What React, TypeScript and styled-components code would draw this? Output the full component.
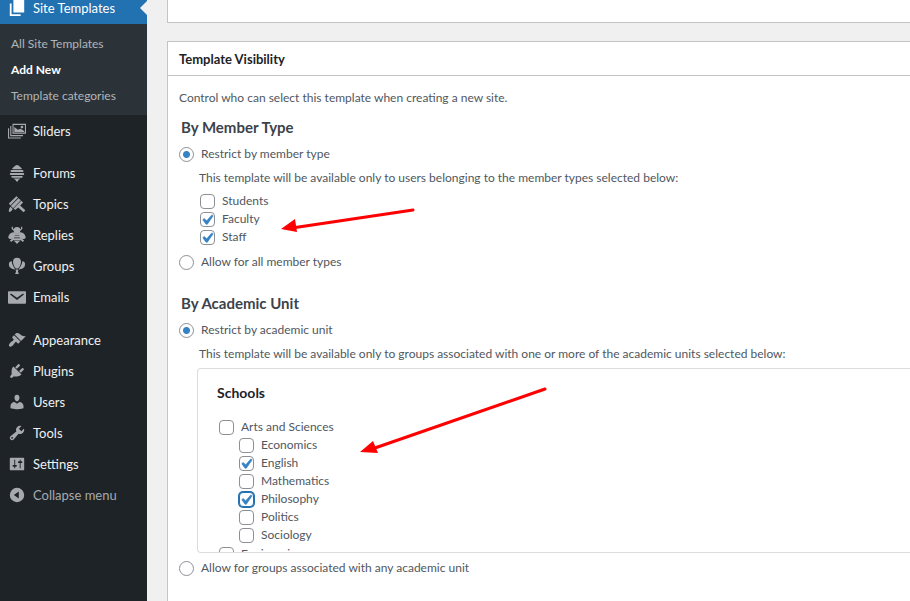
import React, { ReactNode } from "react";
import styled, { createGlobalStyle, css } from "styled-components";

const GlobalStyle = createGlobalStyle`
  *, *::before, *::after { box-sizing: border-box; }
  body {
    margin: 0;
    background: #f0f0f1;
    color: #50575e;
    font: 12px/18px Lato, "Open Sans", sans-serif;
    overflow: hidden;
  }
`;

const Page = styled.div`
  display: flex;
  height: 100vh;
  overflow: hidden;
`;

const Sidebar = styled.nav`
  flex: none;
  width: 147px;
  background: #1d2327;
`;

const MenuList = styled.ul<{ $gap?: number }>`
  list-style: none;
  margin: ${(p) => p.$gap ?? 0}px 0 0;
  padding: 0;
`;

const menuRow = css`
  display: flex;
  align-items: center;
  gap: 7px;
  width: 100%;
  height: 31px;
  padding: 0 0 0 8px;
  font-family: inherit;
  font-size: 13px;
  line-height: 18px;
  text-decoration: none;
`;

const MenuLink = styled.a`
  ${menuRow}
  color: #f0f0f1;
`;

const CurrentLink = styled(MenuLink)`
  position: relative;
  height: 24px;
  padding-bottom: 9px;
  background: #2271b1;
  color: #fff;

  &::after {
    content: "";
    position: absolute;
    right: 0;
    top: 1px;
    border: 7px solid transparent;
    border-left-width: 0;
    border-right-color: #f0f0f1;
  }
`;

const CollapseButton = styled.button`
  ${menuRow}
  border: 0;
  background: none;
  color: #a7aaad;
  cursor: pointer;
`;

const Glyph = styled.svg<{ $bright?: boolean }>`
  flex: none;
  width: 18px;
  height: 18px;
  fill: ${(p) => (p.$bright ? "#fff" : "#a7aaad")};
`;

const Submenu = styled.ul`
  list-style: none;
  margin: 0;
  padding: 7px 0 6px;
  background: #2c3338;
`;

const SubLink = styled.a<{ $current?: boolean }>`
  display: block;
  padding: 4px 11px;
  color: ${(p) => (p.$current ? "#fff" : "#b1b6bb")};
  font-weight: ${(p) => (p.$current ? 700 : 400)};
  text-decoration: none;
`;

const Main = styled.main`
  flex: 1;
  min-width: 0;
  display: flex;
  flex-direction: column;
  gap: 18px;
  padding-left: 20px;
`;

const Postbox = styled.section`
  position: relative;
  border: 1px solid #c3c4c7;
  border-right: 0;
  background: #fff;
`;

const PreviousBox = styled(Postbox)`
  flex: none;
  height: 23px;
  border-top: 0;
`;

const VisibilityBox = styled(Postbox)`
  flex: 1;
  border-bottom: 0;
`;

const BoxTitle = styled.h2`
  margin: 0;
  padding: 9px 11px 7px;
  border-bottom: 1px solid #c3c4c7;
  color: #1d2327;
  font-size: 13px;
  line-height: 17px;
  font-weight: 700;
`;

const BoxBody = styled.div`
  padding: 13px 0 0 11px;
`;

const Intro = styled.p`
  margin: 0;
`;

const Fieldset = styled.fieldset`
  min-width: 0;
  margin: 0 0 12px;
  padding: 0;
  border: 0;
`;

const Legend = styled.legend`
  padding: 11px 2px 9px;
  color: #3c434a;
  font-size: 15px;
  line-height: 18px;
  font-weight: 700;
`;

const Note = styled.p`
  margin: 6px 0 5px 20px;
`;

const ChoiceLabel = styled.label`
  display: flex;
  align-items: center;
  gap: 7px;
  height: 18px;
`;

const Radio = styled.input`
  appearance: none;
  flex: none;
  width: 15px;
  height: 15px;
  margin: 0;
  border: 1px solid #8c8f94;
  border-radius: 50%;
  background: #fff;

  &:checked {
    background: radial-gradient(circle, #3582c4 3px, #fff 4px);
  }
`;

const tick =
  "url(\"data:image/svg+xml,%3Csvg xmlns='http://www.w3.org/2000/svg' viewBox='3 2 15 15'%3E%3Cpath d='M14.83 4.89l1.34.94-5.81 8.38H9.02L5.78 9.67l1.34-1.25 2.57 2.4z' fill='%233582c4' stroke='%233582c4' stroke-width='.6'/%3E%3C/svg%3E\")";

const Checkbox = styled.input<{ $active?: boolean }>`
  appearance: none;
  flex: none;
  width: 15px;
  height: 15px;
  margin: 0;
  border: 1px solid ${(p) => (p.$active ? "#2271b1" : "#8c8f94")};
  border-radius: 4px;
  box-shadow: ${(p) => (p.$active ? "0 0 0 1px #2271b1" : "none")};
  background: #fff center / 15px 15px no-repeat;

  &:checked {
    background-image: ${tick};
  }
`;

const CheckList = styled.ul<{ $indent: number }>`
  list-style: none;
  margin: 0 0 0 ${(p) => p.$indent}px;
  padding: 0;
`;

const MemberTypes = styled(CheckList)`
  margin-bottom: 7px;
`;

const Departments = styled(CheckList)`
  margin-bottom: 1px;
`;

const UnitPanel = styled.div`
  height: 185px;
  margin: 0 0 6px 18px;
  padding: 15px 0 0 19px;
  overflow: hidden;
  border: 1px solid #dcdcde;
  border-right: 0;
  border-radius: 4px 0 0 4px;
`;

const PanelTitle = styled.h3`
  margin: 0 0 16px;
  color: #1d2327;
  font-size: 14px;
  line-height: 18px;
  font-weight: 700;
`;

const Arrow = styled.svg<{ $x: number; $y: number }>`
  position: absolute;
  left: ${(p) => p.$x}px;
  top: ${(p) => p.$y}px;
  pointer-events: none;
  fill: #fe0000;
  stroke: #fe0000;
  stroke-linecap: round;
`;

const icons: Record<string, ReactNode> = {
  templates: <path d="M6 15V1h12v14zM2 5h2v12h10v2H2z" />,
  sliders: (
    <>
      <path d="M5 2h15v11H5zM6.200 3.200v8.600h12.600V3.200z" fillRule="evenodd" />
      <path d="M2.500 4.500h1.200v10h13v1.200H2.500zM0 7h1.200v10.200h13v1.200H0z" />
      <path d="M7 11V5.500l4 3L14 7.500l4 2.500v1z" />
      <circle cx="15.500" cy="5.600" r="1.500" />
    </>
  ),
  forums: (
    <>
      <path d="M8 2Q10 0 12 2l3.200 2.600q.6 1.200-.6 1.200H5.400q-1.200 0-.6-1.200z" />
      <rect x="2.800" y="6.700" width="14.400" height="2.300" rx="1.100" />
      <rect x="2" y="10" width="16" height="2.300" rx="1.100" />
      <rect x="3.600" y="13.200" width="12.800" height="2.200" rx="1.100" />
      <path d="M6 16.200h8l-2.400 1.600L10.800 19.500H9.200l-.8-1.700z" />
    </>
  ),
  topics: (
    <>
      <path d="M1 9.500L9.300 1.300l1.900 1.600-8.600 8.700zM3.200 12.300l8.500-8.800 2.600 2.300-8.700 8.800zM6.200 15l8.500-8.700 2 2-3.200 3.300 5.800 5.400-2 2.300-6-5.500-3.200 3z" />
      <path d="M1 19c-.3-2.700.3-4.600 1.800-6l2.500 2.500c-.7 1.700-2.100 2.900-4.300 3.500z" />
    </>
  ),
  replies: (
    <>
      <path d="M5 .8Q3.800 3.500 7 4.500M15 .8q1.200 2.700-2 3.700" fill="none" stroke="#a7aaad" strokeWidth="1.400" />
      <circle cx="10" cy="4.800" r="3.700" />
      <path d="M8.500 7.500C4 5.500.5 9.500.3 13c1 1.800 4.200 1.700 6.200.5zM11.500 7.500c4.500-2 8 2 8.200 5.500-1 1.800-4.200 1.700-6.200.5z" />
      <path d="M6.500 8h7v2.200h-7zM6 10.900h8v1.900H6zM5.500 13.500h9v2h-9zM6 16.200h8l-2.300 1.800L10 20l-1.700-2z" />
      <path d="M6.500 14L2.800 17M13.500 14l3.700 3" stroke="#a7aaad" strokeWidth="2.200" />
    </>
  ),
  groups: (
    <>
      <path d="M10 .8c6 0 5.400 7.400 1.300 12H8.700C4.600 8.200 4 .8 10 .8z" />
      <path d="M4.200 4.600C.3 4.400.4 9.700 2.500 11.800c1.800 1.700 4 1.600 5.500 2.400C7.500 11.500 4.300 9 4.200 4.600zM15.800 4.600c3.900-.2 3.800 5.100 1.700 7.200-1.800 1.700-4 1.600-5.500 2.400.5-2.700 3.700-5.200 3.800-9.600z" />
      <path d="M8.500 14h3l-.4 2.400 1 2.600H7.900l1-2.600z" />
    </>
  ),
  emails: (
    <path d="M1 3.500h18a1 1 0 011 1v12a1 1 0 01-1 1H1a1 1 0 01-1-1v-12a1 1 0 011-1zm9 9.700l7.400-5.600c.6-.8-.3-1.700-1.100-1.200L10 10.700 3.700 6.400c-.8-.5-1.700.4-1.100 1.200z" />
  ),
  appearance: (
    <path d="M14.480 11.060L7.410 3.990l1.500-1.500c.5-.56 2.300-.47 3.510.32 1.210.8 1.430 1.280 2.910 2.100 1.180.64 2.450 1.260 4.450.85zm-.71.71L6.700 4.700 4.930 6.470c-.39.39-.39 1.020 0 1.410l1.060 1.060c.39.39.39 1.030 0 1.420-.6.6-1.430 1.110-2.210 1.690-.35.26-.7.53-1.010.84C1.430 14.230.4 16.080 1.400 17.070c.99 1 2.840-.03 4.180-1.360.31-.31.58-.66.85-1.020.57-.78 1.080-1.610 1.690-2.210.39-.39 1.020-.39 1.410 0l1.060 1.060c.39.39 1.020.39 1.410 0z" />
  ),
  plugins: (
    <path d="M13.110 4.360L9.870 7.600 8 5.730l3.240-3.240c.35-.34 1.050-.2 1.560.32.52.51.66 1.210.31 1.550zm-8 1.770l.91-1.120 9.010 9.010-1.190.84c-.71.71-2.630 1.160-3.820 1.160H6.140L4.900 17.260c-.59.59-1.540.59-2.120 0-.59-.58-.59-1.530 0-2.120l1.240-1.240v-3.880c0-1.130.4-3.190 1.090-3.890zm7.260 3.970l3.240-3.240c.34-.35 1.040-.21 1.550.31.52.51.66 1.210.31 1.550l-3.240 3.250z" />
  ),
  users: (
    <path d="M10 9.250c-2.270 0-2.730-3.440-2.730-3.440C7 4.020 7.820 2 9.970 2c2.160 0 2.980 2.020 2.710 3.810 0 0-.41 3.440-2.680 3.440zm0 2.570L12.720 10c2.390 0 4.520 2.330 4.520 4.530v2.490s-3.650 1.130-7.240 1.130c-3.650 0-7.240-1.130-7.240-1.130v-2.490c0-2.250 1.940-4.480 4.470-4.480z" />
  ),
  tools: (
    <path d="M16.680 9.770c-1.340 1.340-3.300 1.670-4.950.99l-5.410 6.520c-.99.99-2.590.99-3.580 0s-.99-2.590 0-3.570l6.520-5.420c-.68-1.650-.35-3.610.99-4.950 1.280-1.280 3.120-1.620 4.720-1.060l-2.890 2.890 2.820 2.820 2.860-2.870c.53 1.580.18 3.390-1.080 4.650zM3.810 16.210c.4.39 1.040.39 1.430 0 .4-.4.4-1.040 0-1.430-.39-.4-1.030-.4-1.430 0-.39.39-.39 1.030 0 1.430z" />
  ),
  settings: (
    <path d="M18 16V4c0-.55-.45-1-1-1H3c-.55 0-1 .45-1 1v12c0 .55.45 1 1 1h14c.55 0 1-.45 1-1zM8 11h1c.55 0 1 .45 1 1s-.45 1-1 1H8v1.500c0 .28-.22.5-.5.5s-.5-.22-.5-.5V13H6c-.55 0-1-.45-1-1s.45-1 1-1h1V5.500c0-.28.22-.5.5-.5s.5.22.5.5V11zm5-2h-1c-.55 0-1-.45-1-1s.45-1 1-1h1V5.500c0-.28.22-.5.5-.5s.5.22.5.5V7h1c.55 0 1 .45 1 1s-.45 1-1 1h-1v5.500c0 .28-.22.5-.5.5s-.5-.22-.5-.5V9z" />
  ),
  collapse: (
    <path fillRule="evenodd" d="M10 2a8 8 0 100 16 8 8 0 000-16zm2 4.200v7.600L6.500 10z" />
  ),
};

function Icon({ name, bright }: { name: string; bright?: boolean }) {
  return (
    <Glyph viewBox="0 0 20 20" aria-hidden="true" $bright={bright}>
      {icons[name]}
    </Glyph>
  );
}

function MenuItem({ label }: { label: string }) {
  return (
    <li>
      <MenuLink href="#">
        <Icon name={label.toLowerCase()} />
        {label}
      </MenuLink>
    </li>
  );
}

function CheckItem({ label, checked, active }: { label: string; checked?: boolean; active?: boolean }) {
  return (
    <ChoiceLabel>
      <Checkbox type="checkbox" defaultChecked={checked} $active={active} />
      {label}
    </ChoiceLabel>
  );
}

const community = ["Forums", "Topics", "Replies", "Groups", "Emails"];
const admin = ["Appearance", "Plugins", "Users", "Tools", "Settings"];
const departments = ["Economics", "English", "Mathematics", "Philosophy", "Politics", "Sociology"];

export default function App() {
  return (
    <Page>
      <GlobalStyle />
      <Sidebar aria-label="Main menu">
        <MenuList>
          <li>
            <CurrentLink href="#">
              <Icon name="templates" bright />
              Site Templates
            </CurrentLink>
            <Submenu>
              <li><SubLink href="#">All Site Templates</SubLink></li>
              <li><SubLink href="#" $current>Add New</SubLink></li>
              <li><SubLink href="#">Template categories</SubLink></li>
            </Submenu>
          </li>
          <MenuItem label="Sliders" />
        </MenuList>
        <MenuList $gap={11}>
          {community.map((label) => <MenuItem key={label} label={label} />)}
        </MenuList>
        <MenuList $gap={12}>
          {admin.map((label) => <MenuItem key={label} label={label} />)}
          <li>
            <CollapseButton type="button">
              <Icon name="collapse" />
              Collapse menu
            </CollapseButton>
          </li>
        </MenuList>
      </Sidebar>

      <Main>
        <PreviousBox />
        <VisibilityBox>
          <BoxTitle>Template Visibility</BoxTitle>
          <BoxBody>
            <Intro>Control who can select this template when creating a new site.</Intro>

            <Fieldset>
              <Legend>By Member Type</Legend>
              <ChoiceLabel>
                <Radio type="radio" name="member" defaultChecked />
                Restrict by member type
              </ChoiceLabel>
              <Note>This template will be available only to users belonging to the member types selected below:</Note>
              <MemberTypes $indent={21}>
                <li><CheckItem label="Students" /></li>
                <li><CheckItem label="Faculty" checked /></li>
                <li><CheckItem label="Staff" checked /></li>
              </MemberTypes>
              <ChoiceLabel>
                <Radio type="radio" name="member" />
                Allow for all member types
              </ChoiceLabel>
            </Fieldset>

            <Fieldset>
              <Legend>By Academic Unit</Legend>
              <ChoiceLabel>
                <Radio type="radio" name="unit" defaultChecked />
                Restrict by academic unit
              </ChoiceLabel>
              <Note>
                This template will be available only to groups associated with one or more of the academic units selected below:
              </Note>
              <UnitPanel>
                <PanelTitle>Schools</PanelTitle>
                <CheckList $indent={2}>
                  <li>
                    <CheckItem label="Arts and Sciences" />
                    <Departments $indent={20}>
                      {departments.map((label) => (
                        <li key={label}>
                          <CheckItem
                            label={label}
                            checked={label === "English" || label === "Philosophy"}
                            active={label === "Philosophy"}
                          />
                        </li>
                      ))}
                    </Departments>
                  </li>
                  <li><CheckItem label="Engineering" /></li>
                </CheckList>
              </UnitPanel>
              <ChoiceLabel>
                <Radio type="radio" name="unit" />
                Allow for groups associated with any academic unit
              </ChoiceLabel>
            </Fieldset>
          </BoxBody>

          <Arrow $x={112} $y={164} width="138" height="30" aria-hidden="true">
            <path d="M133 4L12 22" strokeWidth="3" />
            <path d="M1 23L15 13L17 26Z" stroke="none" />
          </Arrow>
          <Arrow $x={192} $y={342} width="192" height="72" aria-hidden="true">
            <path d="M185 5L12 65" strokeWidth="3" />
            <path d="M0 68L13 57L18 69Z" stroke="none" />
          </Arrow>
        </VisibilityBox>
      </Main>
    </Page>
  );
}
